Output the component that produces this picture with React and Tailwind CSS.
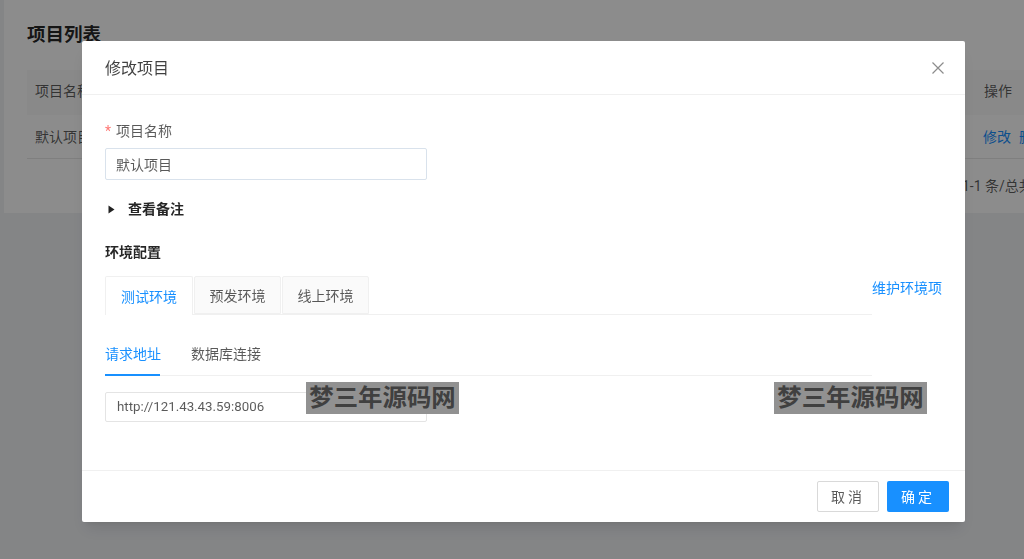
import React from "react";

const font = { fontFamily: 'Roboto, "Noto Sans CJK SC", sans-serif' };

function Background() {
  return (
    <div className="h-[559px] w-[1024px] overflow-hidden bg-[#f0f2f5] pl-1">
      <div className="h-[213px] w-[1100px] bg-white pl-[23px] pt-[23px] text-sm text-[rgba(0,0,0,0.65)]">
        <h1 className="h-[47px] text-[18.5px] font-semibold leading-[25px] text-[rgba(0,0,0,0.85)]">项目列表</h1>
        <div className="flex h-[45px] w-[1040px] items-center justify-between whitespace-nowrap bg-[#fafafa] pb-1 pl-2 pr-[55px]">
          <span>项目名称</span>
          <span>操作</span>
        </div>
        <div className="flex h-[44px] w-[1040px] items-center justify-between whitespace-nowrap border-b border-[#e8e8e8] pl-2 pr-[20px]">
          <span>默认项目</span>
          <span className="flex gap-2 text-[#1890ff]"><span>修改</span><span>删除</span></span>
        </div>
        <div className="mt-[17px] w-[1040px] whitespace-nowrap pl-[935px]">1-1 条/总共 1 条</div>
      </div>
    </div>
  );
}

function Tab({ children, active }) {
  return (
    <div className={active
      ? "flex h-[39px] w-[88px] items-center justify-center rounded-t-[2px] border border-b-0 border-[#f0f0f0] bg-white pt-px text-[#1890ff]"
      : "flex h-[38px] w-[87px] items-center justify-center rounded-t-[2px] border border-[#f0f0f0] bg-[#fafafa] pt-px"}>
      {children}
    </div>
  );
}

function Watermark() {
  return (
    <span className="absolute flex h-8 w-[153px] items-center justify-center whitespace-nowrap bg-[#919191] text-[24.4px] font-bold text-[#404040]">梦三年源码网</span>
  );
}

function Modal() {
  return (
    <div className="fixed inset-0 bg-[rgba(0,0,0,0.45)] pl-[82px] pt-[41px]">
      <div className="relative flex h-[481px] w-[883px] flex-col rounded-[2px] bg-white text-sm text-[rgba(0,0,0,0.65)] shadow-lg">
        <header className="flex h-[54px] shrink-0 items-center justify-between border-b border-[#f0f0f0] pl-[23px] pr-[20px]">
          <span className="pt-0.5 text-base text-[rgba(0,0,0,0.75)]">修改项目</span>
          <svg width="14" height="14" viewBox="0 0 14 14" fill="none" stroke="#8c8c8c" strokeWidth="1.2"><path d="M1.5 1.5l11 11M12.5 1.5l-11 11" /></svg>
        </header>

        <div className="flex-1 pl-[23px] pt-[26px]">
          <label className="flex h-5 items-center whitespace-nowrap">
            <span className="mr-[5px] text-[#ff7875]">*</span>项目名称
          </label>
          <div className="mt-[7px] flex h-8 w-[322px] items-center rounded-[2px] border border-[#d9e2ec] px-[10px] pt-px">默认项目</div>

          <div className="mt-[19px] flex h-5 items-center whitespace-nowrap font-semibold text-[rgba(0,0,0,0.85)]">
            <svg width="7" height="9" viewBox="0 0 7 9" className="ml-[3px] mr-[13px]"><path d="M0.5 0.5L6.5 4.5L0.5 8.5Z" fill="#222" /></svg>
            查看备注
          </div>

          <div className="mt-[23px] h-5 whitespace-nowrap font-semibold leading-5 text-[rgba(0,0,0,0.85)]">环境配置</div>

          <div className="mt-[14px] flex w-[836px] items-start">
            <div className="flex h-[39px] w-[767px] shrink-0 gap-[1px] border-b border-[#f0f0f0]">
              <Tab active>测试环境</Tab>
              <Tab>预发环境</Tab>
              <Tab>线上环境</Tab>
            </div>
            <a className="mt-[2px] whitespace-nowrap text-[#1890ff]">维护环境项</a>
          </div>

          <div className="mt-[20px] flex h-[41px] w-[767px] gap-[31px] whitespace-nowrap border-b border-[#f0f0f0]">
            <span className="h-[41px] w-[55px] border-b-2 border-[#1890ff] pt-[9px] leading-5 text-[#1890ff]">请求地址</span>
            <span className="pt-[9px] leading-5">数据库连接</span>
          </div>

          <div className="mt-4 flex h-[30px] w-[322px] items-center rounded-[2px] border border-[#e4e4e4] px-[11px] pt-px text-[13.3px]">http://121.43.43.59:8006</div>
        </div>

        <footer className="flex h-[52px] shrink-0 items-start justify-end gap-2 border-t border-[#f0f0f0] pr-[16px] pt-[10px]">
          <button className="h-[31px] w-[62px] rounded-[2px] border border-[#d9d9d9] bg-white tracking-[3px]">取消</button>
          <button className="h-[31px] w-[62px] rounded-[2px] bg-[#1890ff] tracking-[3px] text-white">确定</button>
        </footer>

        <div className="absolute left-[224px] top-[341px]"><Watermark /></div>
        <div className="absolute left-[692px] top-[341px]"><Watermark /></div>
      </div>
    </div>
  );
}

export default function App() {
  return (
    <div style={font} className="relative h-[559px] w-[1024px] overflow-hidden">
      <Background />
      <Modal />
    </div>
  );
}
